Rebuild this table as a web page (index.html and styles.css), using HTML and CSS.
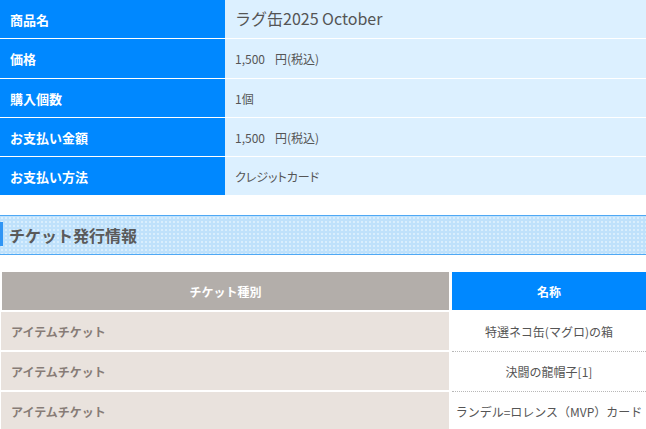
FILE: index.html
```html
<!DOCTYPE html>
<html lang="ja">
<head>
<meta charset="utf-8">
<link rel="stylesheet" href="styles.css">
</head>
<body>
<div class="info">
  <div class="label">商品名</div><div class="value title">ラグ缶2025 October</div>
  <div class="label">価格</div><div class="value"><span class="num">1,500</span>円(税込)</div>
  <div class="label">購入個数</div><div class="value">1個</div>
  <div class="label">お支払い金額</div><div class="value"><span class="num">1,500</span>円(税込)</div>
  <div class="label">お支払い方法</div><div class="value">クレジットカード</div>
</div>

<h2 class="heading">チケット発行情報</h2>

<div class="tickets">
  <div class="th th-kind">チケット種別</div>
  <div class="th th-name">名称</div>
  <div class="kind">アイテムチケット</div>
  <div class="name dotted">特選ネコ缶(マグロ)の箱</div>
  <div class="kind">アイテムチケット</div>
  <div class="name dotted">決闘の龍帽子[1]</div>
  <div class="kind">アイテムチケット</div>
  <div class="name">ランデル=ロレンス（MVP）カード</div>
</div>
</body>
</html>
```
FILE: styles.css
```css
html, body {
  margin: 0;
  padding: 0;
  background: #fff;
}
body {
  width: 646px;
  font-family: "Noto Sans CJK JP", "Noto Sans", sans-serif;
  color: #555;
  overflow: hidden;
}
.info {
  display: grid;
  grid-template-columns: 225px 421px;
  grid-template-rows: 38px 39px 38px 38px 38px;
  row-gap: 1px;
  background: #fff;
}
.label,
.value {
  display: flex;
  align-items: center;
  padding-left: 10px;
}
.label {
  background: #0088ff;
  color: #fff;
  font-size: 13px;
  font-weight: bold;
}
.value {
  background: #dcf0ff;
  color: #555;
  font-size: 12px;
  font-feature-settings: "palt";
}
.value .num {
  margin-right: 10px;
}
.value.title {
  font-size: 16px;
  font-feature-settings: normal;
  padding-bottom: 3px;
}
.heading {
  margin: 20px 0 0;
  height: 38px;
  border-top: 1px solid #4fa8f4;
  border-bottom: 1px solid #4fa8f4;
  background-color: #bfe1fb;
  background-image: radial-gradient(circle, #d9eefd 0.8px, transparent 1.1px);
  background-size: 4px 4px;
  display: flex;
  align-items: center;
  font-size: 16px;
  font-weight: bold;
  color: #5a5a5a;
  position: relative;
  padding-left: 9px;
}
.heading::before {
  content: "";
  position: absolute;
  left: 0;
  top: 6px;
  width: 3px;
  height: 24px;
  background: #2f95f5;
}
.tickets {
  margin-top: 17px;
  display: grid;
  grid-template-columns: 448px 194px;
  column-gap: 3px;
  row-gap: 2px;
  padding-left: 1px;
}
.tickets > div {
  height: 38px;
  display: flex;
  align-items: center;
  font-size: 12px;
  box-sizing: border-box;
}
.th {
  justify-content: center;
  color: #fff;
  font-weight: bold;
  font-size: 12px;
}
.th-kind {
  background: #b3aeaa;
  margin-left: 1px;
}
.th-name {
  background: #0088ff;
  font-size: 13px;
}
.kind {
  background: #e9e2dd;
  color: #877c76;
  font-weight: bold;
  padding-left: 10px;
}
.name {
  justify-content: center;
  background: #fff;
  color: #555;
}
.tickets > .name.dotted {
  height: 40px;
  margin-bottom: -2px;
  border-bottom: 1px dotted #b8b8b8;
  padding-bottom: 1px;
}
```
